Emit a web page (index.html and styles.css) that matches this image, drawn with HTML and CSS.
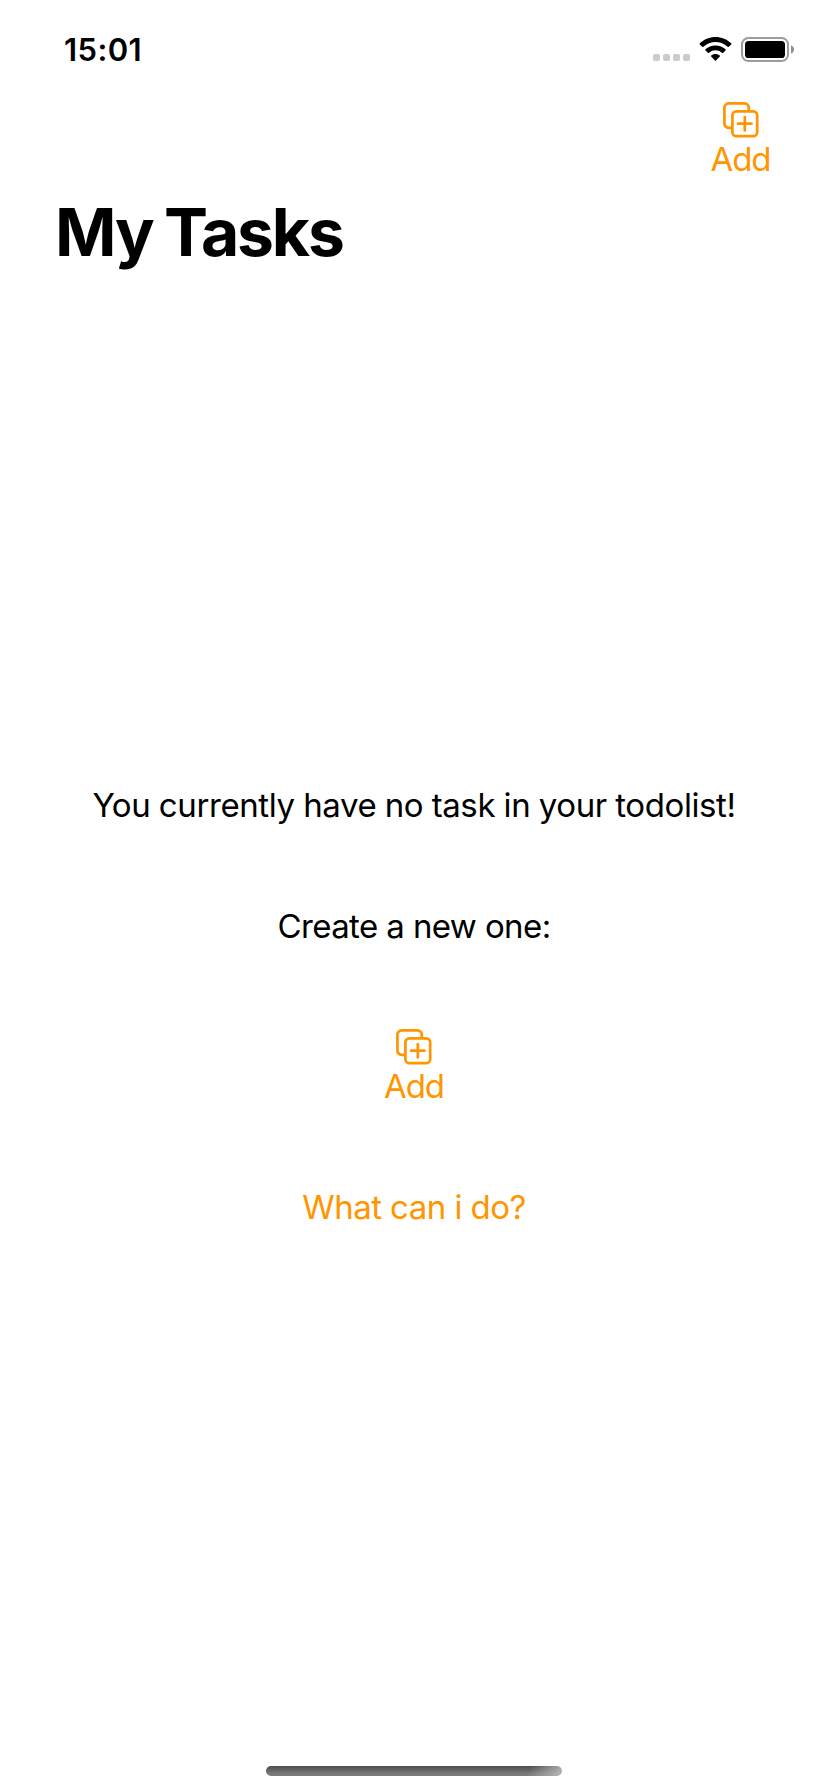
FILE: index.html
```html
<!DOCTYPE html>
<html lang="en">
<head>
<meta charset="utf-8">
<title>My Tasks</title>
<link rel="stylesheet" href="styles.css">
</head>
<body>
<svg class="sprite" width="0" height="0">
  <symbol id="add-icon" viewBox="0 0 36 36">
    <path d="M8.8 25.8H5.6A4.2 4.2 0 0 1 1.4 21.6V5.6A4.2 4.2 0 0 1 5.6 1.4H21.6A4.2 4.2 0 0 1 25.8 5.6V8.8"/>
    <rect x="9.4" y="9.4" width="24.8" height="24.8" rx="4"/>
    <path d="M21.8 15V28.4M15.1 21.7H28.5"/>
  </symbol>
</svg>
<div class="screen">
  <header class="status">
    <span class="time">15:01</span>
    <svg class="indicators" width="146" height="28" viewBox="650 35 146 28">
      <g fill="#cbcbcb">
        <rect x="653" y="54" width="7" height="7" rx="2"/>
        <rect x="663" y="54" width="7" height="7" rx="2"/>
        <rect x="673" y="54" width="7" height="7" rx="2"/>
        <rect x="683" y="54" width="7" height="7" rx="2"/>
      </g>
      <path d="M715.5 37C721.5 37 727.1 39.3 731.2 43.3Q731.7 43.9 731.2 44.4L728.8 46.8Q728.2 47.3 727.6 46.8A17.6 17.6 0 0 0 703.4 46.8Q702.8 47.3 702.2 46.8L699.8 44.4Q699.3 43.9 699.8 43.3C703.9 39.3 709.5 37 715.5 37Z"/>
      <path d="M715.5 45.4C719.4 45.4 722.9 46.9 725.5 49.3Q726.1 49.9 725.5 50.4L723.1 52.8Q722.5 53.3 721.9 52.8A9.6 9.6 0 0 0 709.1 52.8Q708.5 53.3 707.9 52.8L705.5 50.4Q704.9 49.9 705.5 49.3C708.1 46.9 711.6 45.4 715.5 45.4Z"/>
      <path d="M715.5 53.9C717.2 53.9 718.7 54.5 719.8 55.4Q720.4 55.9 719.8 56.5L716 60.4Q715.5 60.9 715 60.4L711.2 56.5Q710.6 55.9 711.2 55.4C712.3 54.5 713.8 53.9 715.5 53.9Z"/>
      <rect x="742" y="38" width="46" height="23" rx="6.4" fill="none" stroke="#9c9c9c" stroke-width="2"/>
      <rect x="745" y="41" width="40" height="17" rx="3.6"/>
      <path d="M791 45.3C792.8 46 794 47.6 794 49.5S792.8 53 791 53.7Z" fill="#8f8f8f"/>
    </svg>
  </header>
  <nav class="toolbar">
    <a class="add">
      <svg class="add-glyph" width="36" height="36"><use href="#add-icon"/></svg>
      <span class="add-label">Add</span>
    </a>
  </nav>
  <h1 class="title">My Tasks</h1>
  <main class="empty">
    <p class="message">You currently have no task in your todolist!</p>
    <p class="prompt">Create a new one:</p>
    <a class="add">
      <svg class="add-glyph" width="36" height="36"><use href="#add-icon"/></svg>
      <span class="add-label">Add</span>
    </a>
    <a class="help">What can i do?</a>
  </main>
  <footer class="home"><div class="home-bar"></div></footer>
</div>
</body>
</html>
```
FILE: styles.css
```css
* { box-sizing: border-box; }
body { margin: 0; background: #fff; }
.sprite { display: block; height: 0; }
.screen {
  display: flex;
  flex-direction: column;
  width: 828px;
  height: 1792px;
  background: #fff;
  color: #000;
  font-family: Inter, "Liberation Sans", sans-serif;
  font-size: 33px;
  line-height: 40px;
}
.status {
  display: flex;
  justify-content: space-between;
  height: 102px;
  padding: 30px 32px 0 64px;
}
.time { font-size: 31px; font-weight: 600; letter-spacing: 0.4px; }
.indicators { display: block; margin-top: 5px; }
.toolbar {
  display: flex;
  justify-content: flex-end;
  height: 90px;
  padding-right: 57px;
}
.add {
  display: flex;
  flex-direction: column;
  align-items: center;
  gap: 1px;
  width: 61px;
  color: #ff9500;
}
.add-label { letter-spacing: -1.1px; }
.add-glyph {
  display: block;
  fill: none;
  stroke: #ff9500;
  stroke-width: 2.7;
  stroke-linecap: round;
}
.title {
  margin: 0;
  padding-left: 55px;
  font-size: 66px;
  line-height: 80px;
  font-weight: 700;
  letter-spacing: -2.2px;
  word-spacing: -2px;
}
.empty {
  flex: 1;
  display: flex;
  flex-direction: column;
  align-items: center;
  padding-top: 513px;
}
.message, .prompt { margin: 0; white-space: nowrap; }
.message { letter-spacing: -0.4px; word-spacing: -0.4px; }
.prompt { margin-top: 81px; margin-bottom: 83px; letter-spacing: -0.6px; }
.help { margin-top: 81px; color: #ff9500; letter-spacing: -0.55px; }
.home {
  display: flex;
  justify-content: center;
  padding-bottom: 16px;
}
.home-bar {
  width: 296px;
  height: 10px;
  border-radius: 5px;
  background:
    linear-gradient(115deg, transparent 88%, rgba(190, 190, 190, .9) 100%),
    linear-gradient(#4e4e4e, #7a7a7a 80%);
}
```
